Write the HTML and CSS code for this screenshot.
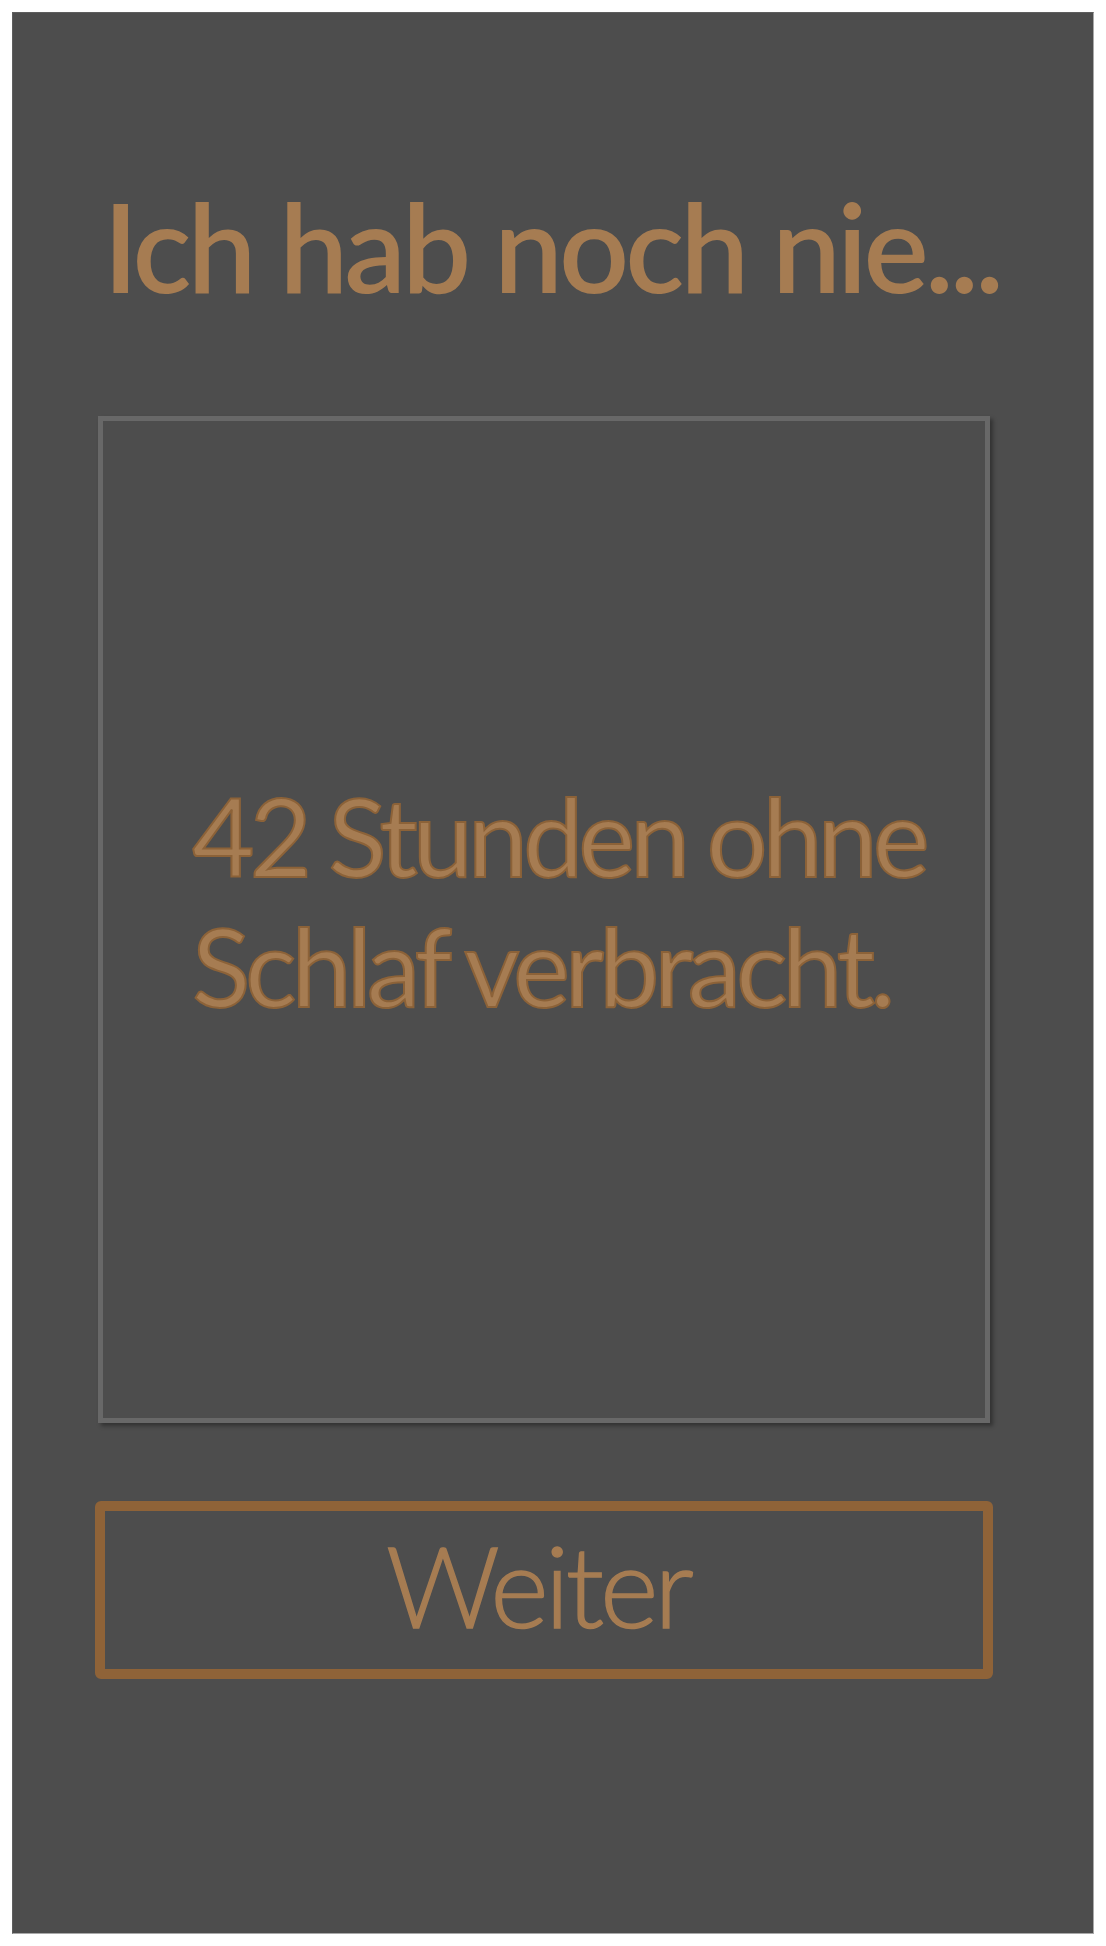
FILE: index.html
```html
<!DOCTYPE html>
<html lang="de">
<head>
<meta charset="utf-8">
<title>Ich hab noch nie...</title>
<link rel="stylesheet" href="styles.css">
</head>
<body>
<div class="frame">
  <h1 class="title">Ich hab noch nie...</h1>
  <div class="card">
    <p class="statement">42 Stunden ohne<br>Schlaf verbracht.</p>
  </div>
  <button class="next">Weiter</button>
</div>
</body>
</html>
```
FILE: styles.css
```css
html, body {
  margin: 0;
  padding: 0;
  background: #ffffff;
}
.frame {
  box-sizing: border-box;
  margin: 12px 0 0 12px;
  width: 1082px;
  height: 1922px;
  background: #4d4d4d;
  border-left: 1px solid #5e5e5e;
  border-top: 1px solid #5e5e5e;
  border-right: 1px solid #a9a9a9;
  border-bottom: 1px solid #a9a9a9;
  padding: 0 0 0 85px;
  display: flex;
  flex-direction: column;
  align-items: flex-start;
  font-family: Lato, "Open Sans", sans-serif;
  color: #a67c52;
}
.title {
  margin: 0;
  padding-top: 158px;
  font-size: 123px;
  font-weight: 600;
  line-height: 150px;
  letter-spacing: -4px;
  margin-left: 5px;
}
.card {
  box-sizing: border-box;
  margin-top: 95px;
  width: 892px;
  height: 1007px;
  border: 5px solid #686868;
  background: #4d4d4d;
  box-shadow: 3px 3px 4px rgba(0, 0, 0, 0.35);
  display: flex;
  align-items: center;
  padding-left: 89px;
}
.statement {
  margin: 0 0 40px 0;
  font-size: 108px;
  line-height: 130px;
  font-weight: 400;
  color: #a67c52;
  -webkit-text-stroke: 2px #8c6238;
  letter-spacing: -5.2px;
  word-spacing: -1px;
}
.next {
  box-sizing: border-box;
  margin-top: 78px;
  margin-left: -3px;
  width: 898px;
  height: 178px;
  border: 10px solid #8f6338;
  border-radius: 6px;
  background: transparent;
  font-family: Lato, "Open Sans", sans-serif;
  font-size: 112px;
  font-weight: 300;
  color: #a67c52;
  -webkit-text-stroke: 1.5px #a67c52;
  line-height: 1;
  letter-spacing: -4px;
  padding: 0 12px 10px 0;
}
```
